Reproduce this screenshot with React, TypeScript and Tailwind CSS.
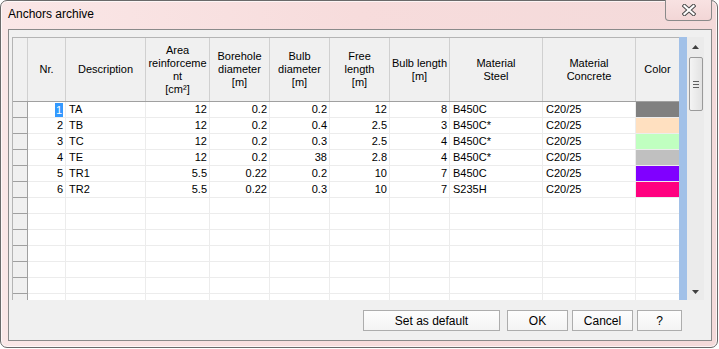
import React from "react";

type Col = { w: string; label: string[]; align: "l" | "r" | "c" };

const cols: Col[] = [
  { w: "w-[38px]", label: ["Nr."], align: "r" },
  { w: "w-[80px]", label: ["Description"], align: "l" },
  { w: "w-[64px]", label: ["Area", "reinforceme", "nt", "[cm²]"], align: "r" },
  { w: "w-[60px]", label: ["Borehole", "diameter", "[m]"], align: "r" },
  { w: "w-[60px]", label: ["Bulb", "diameter", "[m]"], align: "r" },
  { w: "w-[60px]", label: ["Free", "length", "[m]"], align: "r" },
  { w: "w-[60px]", label: ["Bulb length", "[m]"], align: "r" },
  { w: "w-[93px]", label: ["Material", "Steel"], align: "l" },
  { w: "w-[93px]", label: ["Material", "Concrete"], align: "l" },
  { w: "w-[43px]", label: ["Color"], align: "c" },
];

const rows: (string[] | null)[] = [
  ["1", "TA", "12", "0.2", "0.2", "12", "8", "B450C", "C20/25", "#808080"],
  ["2", "TB", "12", "0.2", "0.4", "2.5", "3", "B450C*", "C20/25", "#ffe0c0"],
  ["3", "TC", "12", "0.2", "0.3", "2.5", "4", "B450C*", "C20/25", "#c0ffc0"],
  ["4", "TE", "12", "0.2", "38", "2.8", "4", "B450C*", "C20/25", "#c0c0c0"],
  ["5", "TR1", "5.5", "0.22", "0.2", "10", "7", "B450C", "C20/25", "#8000ff"],
  ["6", "TR2", "5.5", "0.22", "0.3", "10", "7", "S235H", "C20/25", "#ff0080"],
  null,
  null,
  null,
  null,
  null,
  null,
  null,
];

function CloseGlyph() {
  return (
    <svg width="14" height="12" viewBox="0 0 14 12">
      <path d="M2.5 2 L11.5 10 M11.5 2 L2.5 10" stroke="#4b4b4b" strokeWidth="4.2" strokeLinecap="square" fill="none" />
      <path d="M2.5 2 L11.5 10 M11.5 2 L2.5 10" stroke="#ffffff" strokeWidth="2.2" strokeLinecap="square" fill="none" />
    </svg>
  );
}

function Btn({ w, children }: { w: string; children: React.ReactNode }) {
  return (
    <div
      className={`${w} h-[21px] border border-[#adadad] bg-gradient-to-b from-[#fdfdfd] to-[#f4f4f4] flex items-center justify-center text-[12px] leading-[14px] text-black`}
    >
      {children}
    </div>
  );
}

export default function App() {
  return (
    <div className="w-[719px] h-[349px] bg-white font-['Liberation_Sans',Arial,sans-serif] text-black overflow-hidden">
      <div className="w-[718px] h-[348px] rounded-[7px] border border-[#6a6a6a] bg-gradient-to-r from-[#fae7e7] via-[#f7dcdc] to-[#f4dada] shadow-[inset_0_0_0_1px_rgba(255,255,255,0.7)] flex flex-col">
        {/* title bar */}
        <div className="h-[28px] flex justify-between items-start">
          <span className="pl-[7px] pt-[5px] text-[12px] leading-[16px]">Anchors archive</span>
          <div className="-mt-[1px] mr-[5px] w-[47px] h-[21px] border border-t-0 border-[#8a8a8a] rounded-b-[4px] bg-gradient-to-b from-[#f8e2e2] to-[#f2d6d6] flex items-center justify-center">
            <CloseGlyph />
          </div>
        </div>

        {/* client area */}
        <div className="ml-[7px] w-[704px] h-[312px] border border-[#8a8a8a] bg-[#f0f0f0] flex flex-col">
          <div className="ml-[3px] mt-[7px] w-[692px] h-[263px] flex overflow-hidden">
            {/* table */}
            <div className="w-[667px] h-full border-l border-t border-[#b4b4b4] bg-white overflow-hidden text-[11px] leading-[13px]">
              {/* header */}
              <div className="flex h-[64px] border-b border-[#a0a0a0] bg-[#f0f0f0]">
                <div className="w-[15px] h-full border-r border-[#d0d0d0]" />
                {cols.map((c, i) => (
                  <div
                    key={i}
                    className={`${c.w} h-full ${i < cols.length - 1 ? "border-r border-[#d0d0d0]" : ""} flex flex-col items-center justify-center text-center whitespace-nowrap`}
                  >
                    {c.label.map((l, j) => (
                      <span key={j}>{l}</span>
                    ))}
                  </div>
                ))}
              </div>
              {/* rows */}
              {rows.map((r, ri) => (
                <div key={ri} className="flex h-[16px]">
                  <div className="w-[15px] h-full border-r border-b border-[#a0a0a0] bg-[#f0f0f0]" />
                  {cols.map((c, ci) => {
                    const last = ci === cols.length - 1;
                    const v = r ? r[ci] : "";
                    if (last) {
                      return (
                        <div key={ci} className={`${c.w} h-full border-b border-[#ececec]`}>
                          {r && <div className="w-full h-full" style={{ backgroundColor: v }} />}
                        </div>
                      );
                    }
                    const sel = ri === 0 && ci === 0;
                    return (
                      <div
                        key={ci}
                        className={`${c.w} h-full border-r border-b border-[#ececec] flex items-center whitespace-nowrap ${
                          c.align === "r" ? "justify-end pr-[2px]" : "justify-start pl-[3px]"
                        }`}
                      >
                        {sel ? (
                          <span className="bg-[#3399ff] text-white px-[1px] h-[14px] leading-[14px]">{v}</span>
                        ) : (
                          <span>{v}</span>
                        )}
                      </div>
                    );
                  })}
                </div>
              ))}
            </div>
            {/* blue stripe */}
            <div className="w-[8px] h-full bg-[#a2c1e8]" />
            {/* scrollbar */}
            <div className="w-[17px] h-full bg-[#ebebeb] flex flex-col items-center">
              <div className="h-[20px] w-full flex items-start justify-center pt-[8px]">
                <svg width="7" height="4" viewBox="0 0 7 4">
                  <path d="M0 4 L3.5 0 L7 4 Z" fill="#404040" />
                </svg>
              </div>
              <div className="w-[14px] h-[54px] rounded-[2px] border border-[#9a9a9a] bg-gradient-to-r from-[#f4f4f4] to-[#e2e2e2] flex flex-col items-center justify-center gap-[2px]">
                <div className="w-[6px] h-[1px] bg-[#606060]" />
                <div className="w-[6px] h-[1px] bg-[#606060]" />
                <div className="w-[6px] h-[1px] bg-[#606060]" />
              </div>
              <div className="flex-1" />
              <div className="h-[20px] w-full flex items-end justify-center pb-[6px]">
                <svg width="7" height="4" viewBox="0 0 7 4">
                  <path d="M0 0 L3.5 4 L7 0 Z" fill="#404040" />
                </svg>
              </div>
            </div>
          </div>

          {/* buttons */}
          <div className="mt-[10px] flex justify-end pr-[29px]">
            <Btn w="w-[137px]">Set as default</Btn>
            <div className="w-[7px]" />
            <Btn w="w-[61px]">OK</Btn>
            <div className="w-[4px]" />
            <Btn w="w-[61px]">Cancel</Btn>
            <div className="w-[4px]" />
            <Btn w="w-[45px]">?</Btn>
          </div>
        </div>
      </div>
    </div>
  );
}
